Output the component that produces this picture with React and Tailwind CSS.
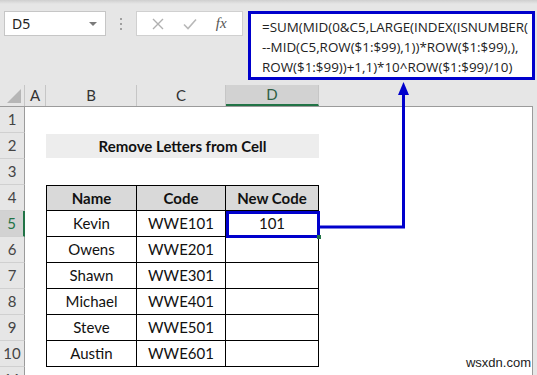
const people = [
  ['Kevin', 'WWE101', '101'],
  ['Owens', 'WWE201', ''],
  ['Shawn', 'WWE301', ''],
  ['Michael', 'WWE401', ''],
  ['Steve', 'WWE501', ''],
  ['Austin', 'WWE601', ''],
];

const sheetFont = { fontFamily: 'Lato, "Open Sans", sans-serif' };

function RowHead({ n, active }) {
  return (
    <div
      className={
        'w-[25px] h-full shrink-0 flex items-center justify-center text-[15px] border-b border-[#d0d0d0] ' +
        (active
          ? 'bg-[#d2d2d2] text-[#217346] border-r-2 border-r-[#217346]'
          : 'bg-[#e6e6e6] text-[#444] border-r border-r-[#9b9b9b]')
      }
    >
      {n}
    </div>
  );
}

function Cell({ w, children, bold, head, boxed, first, top }) {
  return (
    <div
      className={
        w +
        ' h-full shrink-0 flex items-center justify-center text-[15px] text-[#111] ' +
        (boxed ? 'border-r border-b border-black ' : '') +
        (boxed && first ? 'border-l ' : '') +
        (boxed && top ? 'border-t ' : '') +
        (head ? 'bg-[#d9d9d9] ' : '') +
        (bold ? 'font-bold' : '')
      }
    >
      {children}
    </div>
  );
}

function Row({ n, active, children }) {
  return (
    <div className="flex h-[26px]">
      <RowHead n={n} active={active} />
      <div className="w-[21px] shrink-0" />
      {children}
      <div className="flex-1" />
    </div>
  );
}

export default function App() {
  return (
    <div className="relative w-[537px] h-[375px] overflow-hidden bg-white" style={sheetFont}>
      {/* formula bar area */}
      <div className="relative h-[85px] bg-[#e6e6e6]">
        <div className="h-[4px] bg-gradient-to-b from-[#cfcfcf] to-[#e6e6e6]" />
        <div className="flex items-start pt-[7px] pl-[4px]">
          <div
            className="w-[102px] h-[25px] bg-white border border-[#c6c6c6] flex items-center justify-between pl-[7px] pr-[8px] text-[14px] text-[#222]"
            style={{ fontFamily: '"Noto Sans", sans-serif' }}
          >
            <span>D5</span>
            <span className="w-0 h-0 border-l-[4px] border-r-[4px] border-t-[4px] border-l-transparent border-r-transparent border-t-[#7a7a7a]" />
          </div>
          <div className="w-[30px] h-[25px] flex flex-col items-center justify-center gap-[3px]">
            <span className="w-[2px] h-[2px] bg-[#a0a0a0]" />
            <span className="w-[2px] h-[2px] bg-[#a0a0a0]" />
            <span className="w-[2px] h-[2px] bg-[#a0a0a0]" />
          </div>
          <div className="w-[107px] h-[25px] bg-white border border-[#d0d0d0] flex items-center justify-around px-[6px]">
            <svg width="12" height="12" viewBox="0 0 12 12">
              <path d="M1 1 L11 11 M11 1 L1 11" stroke="#b0b0b0" strokeWidth="1.4" />
            </svg>
            <svg width="14" height="12" viewBox="0 0 14 12">
              <path d="M1 6.5 L5 10.5 L13 1.5" stroke="#b8b8b8" strokeWidth="1.6" fill="none" />
            </svg>
            <span className="text-[15px] italic text-[#555]" style={{ fontFamily: '"Liberation Serif", serif' }}>
              fx
            </span>
          </div>
          <div
            className="ml-[5px] w-[287px] h-[69px] bg-white border-[3px] border-[#0000cc] pl-[11px] pt-[3px] text-[13.4px] leading-[20px] text-[#222] whitespace-nowrap overflow-hidden"
            style={{ fontFamily: '"Open Sans", sans-serif' }}
          >
            <div>=SUM(MID(0&amp;C5,LARGE(INDEX(ISNUMBER(</div>
            <div>--MID(C5,ROW($1:$99),1))*ROW($1:$99),),</div>
            <div>ROW($1:$99))+1,1)*10^ROW($1:$99)/10)</div>
          </div>
        </div>
      </div>

      {/* column headers */}
      <div className="flex h-[22px] bg-[#e6e6e6] border-b border-[#9b9b9b] text-[15px] text-[#333]">
        <div className="w-[25px] shrink-0 relative border-r border-[#c6c6c6]">
          <svg className="absolute right-[3px] bottom-[3px]" width="14" height="14" viewBox="0 0 14 14">
            <polygon points="14,0 14,14 0,14" fill="#b6b6b6" />
          </svg>
        </div>
        <div className="w-[21px] shrink-0 flex items-center justify-center border-r border-[#c6c6c6]">A</div>
        <div className="w-[91px] shrink-0 flex items-center justify-center border-r border-[#c6c6c6]">B</div>
        <div className="w-[89px] shrink-0 flex items-center justify-center border-r border-[#c6c6c6]">C</div>
        <div className="w-[93px] shrink-0 flex items-center justify-center bg-[#d2d2d2] text-[#2f5f45] border-b-2 border-[#217346] border-r border-r-[#c6c6c6]">
          D
        </div>
        <div className="flex-1" />
      </div>

      {/* sheet rows */}
      <Row n={1} />
      <Row n={2}>
        <div className="w-[273px] h-full shrink-0 py-[1px]">
          <div className="h-full bg-[#ededed] flex items-center justify-center text-[15px] font-bold text-[#111]">
            Remove Letters from Cell
          </div>
        </div>
      </Row>
      <Row n={3} />
      <Row n={4}>
        <Cell w="w-[91px]" boxed first top head bold>Name</Cell>
        <Cell w="w-[89px]" boxed top head bold>Code</Cell>
        <Cell w="w-[93px]" boxed top head bold>New Code</Cell>
      </Row>
      {people.map((p, i) => (
        <Row key={p[0]} n={i + 5} active={i === 0}>
          <Cell w="w-[91px]" boxed first>{p[0]}</Cell>
          <Cell w="w-[89px]" boxed>{p[1]}</Cell>
          <Cell w="w-[93px]" boxed>{p[2]}</Cell>
        </Row>
      ))}
      <Row n={11} />

      {/* right edge */}
      <div className="absolute right-0 top-[106px] bottom-0 w-[5px] bg-[#e6e6e6] border-l border-[#9b9b9b]" />

      {/* active cell */}
      <div className="absolute left-[226px] top-[211px] w-[94px] h-[27px] border-[3px] border-[#0000cc]" />
      <div className="absolute left-[317px] top-[235px] w-[4px] h-[4px] bg-[#217346]" />

      {/* connector arrow */}
      <svg className="absolute inset-0 pointer-events-none" width="537" height="375">
        <polyline points="320,227 403.5,227 403.5,92" fill="none" stroke="#0000cc" strokeWidth="3" />
        <polygon points="403.5,82 398,95 409,95" fill="#0000cc" />
      </svg>

      <div className="absolute right-[6px] bottom-[3px] text-[13px] text-[#222]" style={{ fontFamily: '"Liberation Sans", sans-serif' }}>
        wsxdn.com
      </div>
    </div>
  );
}
